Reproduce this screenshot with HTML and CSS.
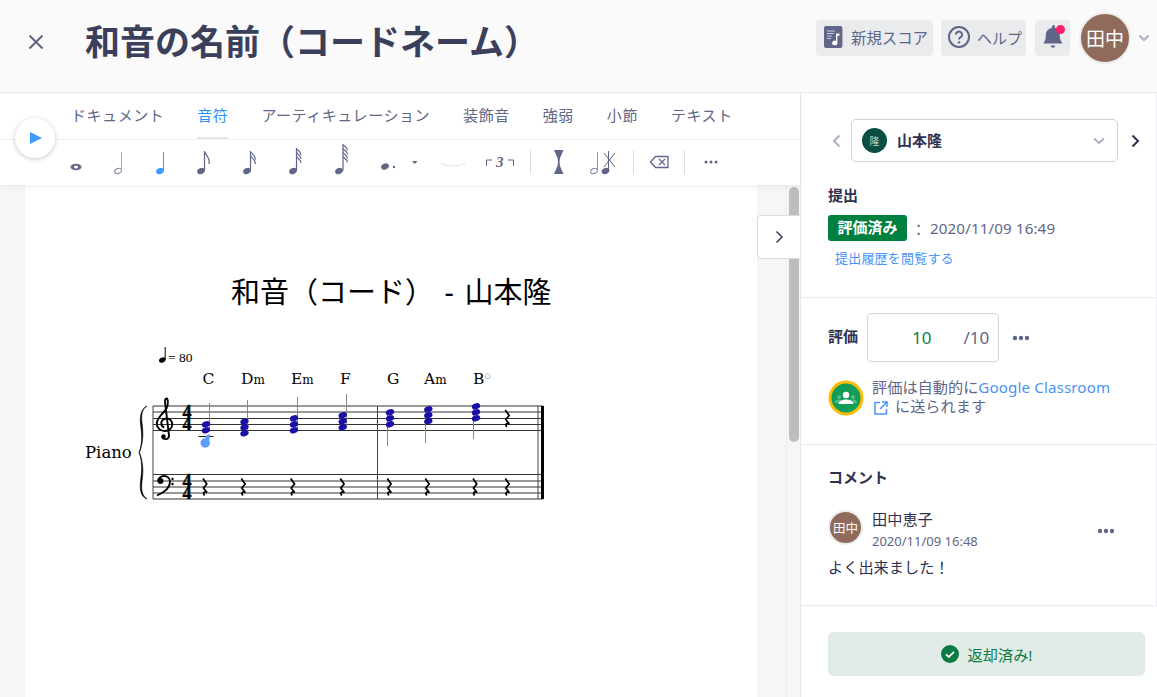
FILE: index.html
```html
<!DOCTYPE html>
<html lang="ja">
<head>
    <meta charset="UTF-8">
    <title>和音の名前（コードネーム）</title>
    <link rel="stylesheet" href="styles.css">
</head>
<body>
    <header class="topbar">
        <button class="close-btn" aria-label="閉じる">
            <svg width="16" height="16" viewBox="0 0 16 16"><path d="M1.500 1.500l13 13M14.500 1.500l-13 13" class="ico-line"/></svg>
        </button>
        <h1 class="page-title">和音の名前（コードネーム）</h1>
        <div class="actions">
            <a class="action-btn new-score">
                <svg width="19" height="22" viewBox="0 0 19 22">
                    <rect width="18.400" height="22" rx="2" fill="#5f6688"/>
                    <path d="M3 5h8M3 7.500h7M3 10h5M3 12.500h4" stroke="#c9cce0" stroke-width="1"/>
                    <path d="M12 7.500h3.500v2.200H13.400v7.300a2.600 2.300 0 1 1-1.400-2z" fill="#fff"/>
                </svg>
                <span>新規スコア</span>
            </a>
            <a class="action-btn help">
                <svg width="22" height="22" viewBox="0 0 22 22">
                    <circle cx="11" cy="11" r="10" fill="none" stroke="#5f6688" stroke-width="2"/>
                    <path d="M7.800 8.600a3.200 3 0 1 1 4.800 2.600c-1 .6-1.600 1.100-1.600 2.400" fill="none" stroke="#5f6688" stroke-width="2"/>
                    <circle cx="11" cy="16.400" r="1.200" fill="#5f6688"/>
                </svg>
                <span>ヘルプ</span>
            </a>
            <a class="action-btn bell">
                <svg width="20" height="24" viewBox="0 0 20 24">
                    <path d="M9 1.500a1.500 1.500 0 0 1 3 0v1.200c3.400.8 4.700 3.600 4.700 7 0 4 .9 6.200 2.300 7.800v1H.8v-1c1.400-1.600 2-3.800 2-7.800 0-3.400 2.600-6.200 6.200-7z" fill="#5f6688"/>
                    <path d="M7.800 20.500h4.400a2.200 2.200 0 0 1-4.400 0z" fill="#5f6688"/>
                </svg>
                <i class="bell-dot"></i>
            </a>
            <div class="avatar avatar-lg">田中</div>
            <svg class="user-caret" width="12" height="8" viewBox="0 0 12 8"><path d="M1.500 1.500L6 6l4.500-4.500" fill="none" stroke="#a9afc4" stroke-width="2"/></svg>
        </div>
    </header>

    <main class="workspace">
        <section class="editor">
            <div class="toolbar">
                <button class="play-btn" aria-label="再生">
                    <svg width="12" height="12" viewBox="0 0 12 12"><path d="M0 0l12 6-12 6z" fill="#3d9bff"/></svg>
                </button>
                <nav class="tabs">
                    <a class="tab">ドキュメント</a>
                    <a class="tab active">音符</a>
                    <a class="tab">アーティキュレーション</a>
                    <a class="tab">装飾音</a>
                    <a class="tab">強弱</a>
                    <a class="tab">小節</a>
                    <a class="tab">テキスト</a>
                </nav>
                <div class="tools">
                    <svg width="32" height="30" class="tool">
                        <ellipse cx="16" cy="21" rx="5.500" ry="3.200" fill="#5f6688"/><ellipse cx="16" cy="21" rx="2" ry="1.500" fill="#fff"/>
                    </svg>
                    <svg width="52" height="30" class="tool">
                        <ellipse cx="26" cy="25" rx="3.500" ry="2.500" transform="rotate(-25 26 25)" fill="none" stroke="#7a80a0"/>
                        <path d="M29.500 24.500V6" stroke="#a6abc2"/>
                    </svg>
                    <svg width="34" height="30" class="tool">
                        <ellipse cx="16" cy="25" rx="4" ry="3" transform="rotate(-25 16 25)" fill="#3d9bff"/>
                        <path d="M19.500 24.500V6" stroke="#3d9bff"/>
                    </svg>
                    <svg width="52" height="30" class="tool">
                        <ellipse cx="23" cy="25" rx="4" ry="3" transform="rotate(-25 23 25)" fill="#5f6688"/>
                        <path d="M26.500 24.500V5c.5 4 6 6 4.500 13" stroke="#5f6688" stroke-width="1.200" fill="none"/>
                    </svg>
                    <svg width="40" height="30" class="tool">
                        <ellipse cx="17" cy="25" rx="4" ry="3" transform="rotate(-25 17 25)" fill="#5f6688"/>
                        <path d="M20.500 24.500V5c.5 3 5 4 5 8.500M20.500 9c.5 3 5 4 5 9" stroke="#5f6688" stroke-width="1.200" fill="none"/>
                    </svg>
                    <svg width="52" height="30" class="tool">
                        <ellipse cx="23" cy="25" rx="4" ry="3" transform="rotate(-25 23 25)" fill="#5f6688"/>
                        <path d="M26.500 24.500V2c.5 2.500 4.500 3 4.500 7M26.500 6c.5 2.500 4.500 3 4.500 7M26.500 10c.5 2.500 4.500 3 4.500 7" stroke="#5f6688" stroke-width="1.200" fill="none"/>
                    </svg>
                    <svg width="38" height="30" class="tool">
                        <ellipse cx="17" cy="25" rx="4" ry="3" transform="rotate(-25 17 25)" fill="#5f6688"/>
                        <path d="M21 24.500V-2c.5 2.500 4.500 3 4.500 6.500M21 2c.5 2.500 4.500 3 4.500 6.500M21 6c.5 2.500 4.500 3 4.500 6.500M21 10c.5 2.500 4.500 3 4.500 6.500" stroke="#5f6688" stroke-width="1.200" fill="none"/>
                    </svg>
                    <svg width="60" height="30" class="tool">
                        <ellipse cx="25" cy="20.500" rx="4" ry="3" transform="rotate(-25 25 20.500)" fill="#5f6688"/>
                        <circle cx="34" cy="21" r="1.200" fill="#5f6688"/>
                        <path d="M52 15h5.500l-2.750 3z" fill="#5f6688"/>
                    </svg>
                    <svg width="66" height="30" class="tool">
                        <path d="M21 17c5 4 19 4 24 0" stroke="#e4e5ea" stroke-width="1.200" fill="none"/>
                    </svg>
                    <svg width="44" height="30" class="tool">
                        <path d="M.5 20v-6h5.500M22 14h5.500v6" stroke="#5f6688" fill="none"/>
                        <text x="10" y="20.500" class="tuplet-num">3</text>
                    </svg>
                    <i class="tool-sep"></i>
                    <svg width="56" height="30" class="tool">
                        <path d="M23 4h9.500l-3.500 8-.5 4 .5 4 3.500 8H23l3.500-8 .5-4-.5-4z" fill="#5f6688"/>
                    </svg>
                    <svg width="46" height="30" class="tool">
                        <ellipse cx="7" cy="25" rx="3.500" ry="2.500" transform="rotate(-25 7 25)" fill="none" stroke="#7a80a0"/>
                        <path d="M10.500 24.500V6" stroke="#8c92ac"/>
                        <ellipse cx="18.500" cy="25" rx="4" ry="3" transform="rotate(-25 18.500 25)" fill="#5f6688"/>
                        <path d="M21.500 24V5M17 7l11 14M28 7L17 21" stroke="#5f6688" fill="none"/>
                    </svg>
                    <i class="tool-sep"></i>
                    <svg width="50" height="30" class="tool">
                        <path d="M21.500 10.500H34v11H21.500l-5-5.500z" fill="none" stroke="#5f6688" stroke-width="1.300"/>
                        <path d="M25 13l6 6M31 13l-6 6" stroke="#5f6688" stroke-width="1.300"/>
                    </svg>
                    <i class="tool-sep"></i>
                    <svg width="44" height="30" class="tool">
                        <circle cx="21" cy="16" r="1.500" fill="#5f6688"/><circle cx="26" cy="16" r="1.500" fill="#5f6688"/><circle cx="31" cy="16" r="1.500" fill="#5f6688"/>
                    </svg>
                </div>
            </div>

            <div class="score-area">
                <div class="paper">
                    <svg class="score" width="732" height="512" viewBox="25 185 732 512">
                        <defs>
                            <path id="rest" class="rest-mark" d="M-2-8.500L1.800-3-1.500 1 2 5.500C-.5 4-2.500 5.500-.5 8.500"/>
                        </defs>

                        <text x="231" y="303" class="score-title">和音（コード） - 山本隆</text>

                        <ellipse cx="162.300" cy="360" rx="3.400" ry="2.500" transform="rotate(-25 162.300 360)"/>
                        <path d="M165.200 359.500V347" stroke="#000"/>
                        <text x="168" y="362" class="tempo">= 80</text>

                        <text x="202.500" y="384" class="chord">C</text>
                        <text x="241" y="384" class="chord">D<tspan class="chord-sub">m</tspan></text>
                        <text x="291" y="384" class="chord">E<tspan class="chord-sub">m</tspan></text>
                        <text x="340" y="384" class="chord">F</text>
                        <text x="387" y="384" class="chord">G</text>
                        <text x="424" y="384" class="chord">A<tspan class="chord-sub">m</tspan></text>
                        <text x="473" y="384" class="chord">B<tspan class="chord-sup" dy="-6">○</tspan></text>

                        <text x="85" y="458" class="instrument">Piano</text>

                        <!-- staves -->
                        <path class="staff" d="M153 406H543M153 412H543M153 418.500H543M153 424.500H543M153 430.500H543"/>
                        <path class="staff" d="M153 474.500H543M153 481H543M153 487H543M153 493H543M153 499H543"/>
                        <path class="bar" d="M153 406V499M377.500 406V499M538 406V499"/>
                        <rect x="541" y="406" width="3" height="93"/>

                        <!-- brace -->
                        <path class="brace" d="M147 406c-5 3-6 9-5 17s2 17-2.500 29.500c4.500 12.500 3.500 21 2.500 29s0 14 5 17.500c-6-2-7.500-9-6.500-17.500s2.500-19-1.500-29c4-10 2.500-20.500 1.500-29s1.500-15.500 6.500-17.500z"/>

                        <!-- treble clef -->
                        <path class="clef" d="M162 437c2 3.500 7 2.500 7-1.500L165 402c-.5-3 1.500-4.500 2.300-3 1.500 3 .5 9-3 12.500-4 4-7.500 7.500-7.500 12 0 5 4 7.500 8 7.500 4.500 0 7.500-3 7.500-6.500s-2.500-6-5.500-6-5.500 2-5.500 4.500 1.500 4 3 4.500"/>
                        <circle cx="163.500" cy="436.500" r="2.200"/>

                        <!-- bass clef -->
                        <circle cx="160.500" cy="481" r="2.900"/>
                        <path class="clef" d="M158 481c0-3 3-5 6-5 3.500 0 6 2.500 6 6 0 5-5 10-13 13.500"/>
                        <circle cx="172.500" cy="479" r="1.200"/><circle cx="172.500" cy="484" r="1.200"/>

                        <text class="time-sig"><tspan x="182.500" y="418">4</tspan><tspan x="182.500" y="430">4</tspan></text>
                        <text class="time-sig"><tspan x="182.500" y="487">4</tspan><tspan x="182.500" y="499">4</tspan></text>

                        <!-- chords -->
                        <path class="ledger" d="M198.500 436.500h15"/>
                        <path class="stem" d="M209.500 430V403M247.500 433V400M297.500 430V397M346.500 427V394M387.500 412V446M425.500 409V443M473.500 406V439"/>
                        <g class="notes">
                            <ellipse cx="206" cy="424.300" rx="4.300" ry="3"/><ellipse cx="206" cy="430.300" rx="4.300" ry="3"/>
                            <ellipse cx="244.500" cy="421.500" rx="4.300" ry="3"/><ellipse cx="244.500" cy="427.300" rx="4.300" ry="3"/><ellipse cx="244.500" cy="433.300" rx="4.300" ry="3"/>
                            <ellipse cx="294" cy="418.300" rx="4.300" ry="3"/><ellipse cx="294" cy="424.300" rx="4.300" ry="3"/><ellipse cx="294" cy="430.300" rx="4.300" ry="3"/>
                            <ellipse cx="342.700" cy="415.300" rx="4.300" ry="3"/><ellipse cx="342.700" cy="421.300" rx="4.300" ry="3"/><ellipse cx="342.700" cy="427.300" rx="4.300" ry="3"/>
                            <ellipse cx="390" cy="412.300" rx="4.300" ry="3"/><ellipse cx="390" cy="418.300" rx="4.300" ry="3"/><ellipse cx="390" cy="424.300" rx="4.300" ry="3"/>
                            <ellipse cx="428.300" cy="409.300" rx="4.300" ry="3"/><ellipse cx="428.300" cy="415.300" rx="4.300" ry="3"/><ellipse cx="428.300" cy="421.300" rx="4.300" ry="3"/>
                            <ellipse cx="476" cy="406.300" rx="4.300" ry="3"/><ellipse cx="476" cy="412.300" rx="4.300" ry="3"/><ellipse cx="476" cy="418.300" rx="4.300" ry="3"/>
                        </g>
                        <path d="M204 443l2-7.500 4-1.500-1 9z" fill="#5a9cff"/>
                        <circle cx="205.200" cy="443" r="4.700" fill="#5a9cff"/>

                        <!-- rests -->
                        <use href="#rest" x="507.300" y="418.500"/>
                        <use href="#rest" x="205" y="487"/><use href="#rest" x="243.300" y="487"/>
                        <use href="#rest" x="292.700" y="487"/><use href="#rest" x="342.300" y="487"/>
                        <use href="#rest" x="389.300" y="487"/><use href="#rest" x="427.300" y="487"/>
                        <use href="#rest" x="475" y="487"/><use href="#rest" x="507.300" y="487"/>
                    </svg>
                </div>
                <div class="scroll-track"><div class="scroll-thumb"></div></div>
                <button class="collapse-tab" aria-label="パネルを閉じる">
                    <svg width="9" height="14" viewBox="0 0 9 14"><path d="M1.500 1.500L7 7l-5.500 5.500" fill="none" stroke="#3d4264" stroke-width="1.500"/></svg>
                </button>
            </div>
        </section>

        <aside class="side-panel">
            <section class="panel-section submit-section">
                <div class="student-row">
                    <svg width="9" height="14" viewBox="0 0 9 14"><path d="M7.500 1.500L2 7l5.500 5.500" fill="none" stroke="#aeb2c0" stroke-width="2"/></svg>
                    <div class="student-select">
                        <span class="avatar avatar-student">隆</span>
                        <strong>山本隆</strong>
                        <svg class="select-caret" width="12" height="8" viewBox="0 0 12 8"><path d="M1 1.500L6 6l5-4.500" fill="none" stroke="#a9afc4" stroke-width="2"/></svg>
                    </div>
                    <svg class="next-student" width="9" height="14" viewBox="0 0 9 14"><path d="M1.500 1.500L7 7l-5.500 5.500" fill="none" stroke="#2e3150" stroke-width="2"/></svg>
                </div>
                <h3 class="panel-heading">提出</h3>
                <div class="status-row">
                    <span class="badge">評価済み</span>
                    <span class="status-colon">：</span>
                    <span class="status-date">2020/11/09 16:49</span>
                </div>
                <a class="history-link">提出履歴を閲覧する</a>
            </section>

            <section class="panel-section grade-section">
                <div class="grade-row">
                    <h3 class="panel-heading">評価</h3>
                    <div class="grade-box"><span class="grade-value">10</span><span class="grade-max">/10</span></div>
                    <svg class="dots" width="18" height="6" viewBox="0 0 18 6"><circle cx="3" cy="3" r="2.200"/><circle cx="9" cy="3" r="2.200"/><circle cx="15" cy="3" r="2.200"/></svg>
                </div>
                <div class="classroom-note">
                    <svg class="classroom-icon" width="36" height="36" viewBox="0 0 36 36">
                        <circle cx="18" cy="18" r="17.500" fill="#fbbc04"/>
                        <circle cx="18" cy="18" r="14.500" fill="#0f9d58"/>
                        <circle cx="18" cy="15" r="3.200" fill="#fff"/>
                        <circle cx="11" cy="17" r="2" fill="#57bb8a"/><circle cx="25" cy="17" r="2" fill="#57bb8a"/>
                        <path d="M6.500 23c.5-2.500 3-3.500 4.500-3.500s3 .5 4 1.500l-2 2zM29.500 23c-.5-2.500-3-3.500-4.500-3.500s-3 .5-4 1.500l2 2z" fill="#57bb8a"/>
                        <path d="M10.500 24c.5-3 4-4.500 7.500-4.500s7 1.500 7.500 4.500z" fill="#fff"/>
                    </svg>
                    <p>評価は自動的に<a>Google Classroom</a><br><svg class="external-icon" width="14" height="14" viewBox="0 0 14 14"><path d="M6 1.500H1v11.500h11.500V8M8 1h5v5M13 1L6 8" fill="none" stroke="#4a94f8" stroke-width="1.500"/></svg> に送られます</p>
                </div>
            </section>

            <section class="panel-section comment-section">
                <h3 class="panel-heading">コメント</h3>
                <div class="comment-head">
                    <div class="avatar avatar-sm">田中</div>
                    <div class="comment-meta">
                        <div class="comment-name">田中恵子</div>
                        <div class="comment-time">2020/11/09 16:48</div>
                    </div>
                    <svg class="dots" width="18" height="6" viewBox="0 0 18 6"><circle cx="3" cy="3" r="2.200"/><circle cx="9" cy="3" r="2.200"/><circle cx="15" cy="3" r="2.200"/></svg>
                </div>
                <p class="comment-body">よく出来ました！</p>
            </section>

            <div class="return-wrap">
                <button class="return-btn">
                    <svg width="18" height="18" viewBox="0 0 18 18"><circle cx="9" cy="9" r="9" fill="#0a7c42"/><path d="M5 9.300l2.800 2.700L13 6.800" fill="none" stroke="#fff" stroke-width="1.800"/></svg>
                    返却済み!
                </button>
            </div>
        </aside>
    </main>
</body>
</html>
```

FILE: styles.css
```css
* {
    box-sizing: border-box;
}

html, body {
    height: 100%;
    margin: 0;
    overflow: hidden;
}

body {
    font-family: "Noto Sans", "Noto Sans CJK JP", sans-serif;
    font-size: 15.2px;
    color: #5f6688;
    background-color: #fafafa;
    display: flex;
    flex-direction: column;
}

button {
    font-family: inherit;
    border: none;
    padding: 0;
    background: none;
}

h1, h3, p {
    margin: 0;
}

/* Top bar */
.topbar {
    height: 93px;
    flex: none;
    display: flex;
    align-items: center;
    padding: 0 7px 8px 28px;
    background-color: #fafafa;
    border-bottom: 1px solid #e9e9ee;
}

.close-btn {
    width: 16px;
    height: 16px;
    display: flex;
}

.ico-line {
    stroke: #5f6688;
    stroke-width: 2;
}

.page-title {
    margin-left: 41px;
    font-size: 35px;
    font-weight: 700;
    line-height: 1.2;
    color: #3a3f5c;
}

.actions {
    margin-left: auto;
    align-self: flex-start;
    padding-top: 12px;
    display: flex;
    align-items: center;
}

.action-btn {
    height: 36px;
    display: flex;
    align-items: center;
    background-color: #eaebed;
    border-radius: 4px;
    position: relative;
    margin-right: 8px;
    font-size: 15.4px;
    padding-bottom: 2px;
}

.new-score {
    width: 117px;
    padding-left: 8px;
    gap: 8px;
}

.help {
    width: 85px;
    padding-left: 7px;
    gap: 7px;
    font-size: 15px;
}

.bell {
    width: 35px;
    margin: 0 9px 0 1px;
    justify-content: center;
}

.bell-dot {
    position: absolute;
    top: 5px;
    right: 5px;
    width: 9px;
    height: 9px;
    border-radius: 50%;
    background-color: #ff1f6b;
}

.avatar {
    border-radius: 50%;
    background-color: #906b5c;
    color: #fff;
    display: flex;
    align-items: center;
    justify-content: center;
    flex: none;
}

.avatar-lg {
    width: 52px;
    height: 52px;
    border: 2px solid #ececec;
    font-size: 19px;
}

.user-caret {
    margin-left: 7px;
}

/* Editor side */
.workspace {
    flex: 1;
    display: flex;
    min-height: 0;
}

.editor {
    width: 800px;
    flex: none;
    display: flex;
    flex-direction: column;
    position: relative;
}

.toolbar {
    height: 92px;
    flex: none;
    background-color: #fff;
    box-shadow: 0 2px 6px rgba(0, 0, 0, 0.06);
    position: relative;
    z-index: 2;
}

.play-btn {
    position: absolute;
    left: 15px;
    top: 25px;
    width: 40px;
    height: 40px;
    border-radius: 50%;
    background-color: #fff;
    box-shadow: 0 1px 5px rgba(0, 0, 0, 0.22);
    display: flex;
    align-items: center;
    justify-content: center;
    padding-left: 1px;
}

.tabs {
    height: 47px;
    display: flex;
    gap: 33px;
    padding-left: 71px;
    border-bottom: 1px solid #f0f0f2;
}

.tab {
    height: 46px;
    line-height: 44px;
    font-size: 15px;
    letter-spacing: 0.55px;
    white-space: nowrap;
    border-bottom: 2px solid transparent;
    color: #5f6688;
}

.tab.active {
    color: #1e90ff;
    border-bottom-color: #e5e5ea;
}

.tools {
    display: flex;
    align-items: flex-start;
    padding: 6px 0 0 60px;
}

.tool {
    flex: none;
    overflow: visible;
}

.tool-sep {
    width: 1px;
    height: 24px;
    margin-top: 4px;
    flex: none;
    background-color: #dcdde3;
}

.tuplet-num {
    font-family: "Liberation Serif", serif;
    font-style: italic;
    font-weight: 700;
    font-size: 15px;
    fill: #5f6688;
}

/* Score */
.score-area {
    flex: 1;
    min-height: 0;
    display: flex;
    background-color: #f6f6f6;
    position: relative;
}

.paper {
    width: 732px;
    margin-left: 25px;
    background-color: #fff;
}

.score {
    display: block;
    font-family: "DejaVu Serif", serif;
}

.score-title {
    font-family: "Noto Sans", "Noto Sans CJK JP", sans-serif;
    font-size: 29px;
    word-spacing: 3px;
    fill: #000;
}

.tempo {
    font-family: "Liberation Serif", serif;
    font-size: 13.5px;
}

.chord {
    font-size: 15.5px;
}

.chord-sub {
    font-size: 12px;
}

.chord-sup {
    font-family: "DejaVu Sans", sans-serif;
    font-size: 7px;
    fill: #555;
}

.instrument {
    font-size: 16.5px;
}

.staff {
    stroke: #333;
    stroke-width: 1;
    fill: none;
}

.bar {
    stroke: #444;
    stroke-width: 1;
}

.clef {
    fill: none;
    stroke: #000;
    stroke-width: 1.9;
}

.brace {
    stroke: #000;
    stroke-width: 0.6;
}

.rest-mark {
    fill: none;
    stroke: #000;
    stroke-width: 1.7;
}

.time-sig {
    font-family: "Liberation Serif", serif;
    font-weight: 700;
    font-size: 18px;
    stroke: #000;
    stroke-width: 0.4;
}

.ledger {
    stroke: #222;
    stroke-width: 1;
}

.stem {
    stroke: #888;
    stroke-width: 1;
}

.notes ellipse {
    fill: #1c0fa8;
    transform-box: fill-box;
    transform-origin: center;
    transform: rotate(-20deg);
}

.scroll-track {
    margin-left: 29px;
    width: 14px;
    padding: 2px 2px 0;
    background-color: #f6f6f6;
    border-left: 1px solid #eee;
}

.scroll-thumb {
    width: 10px;
    height: 255px;
    background-color: #bdbdbd;
    border-radius: 5px;
}

.collapse-tab {
    position: absolute;
    top: 30px;
    left: 757px;
    width: 43px;
    height: 44px;
    background-color: #fff;
    border: 1px solid #d5dddd;
    border-right: none;
    border-radius: 4px 0 0 4px;
    display: flex;
    align-items: center;
    justify-content: center;
}

/* Right panel */
.side-panel {
    flex: 1;
    background-color: #fff;
    border-left: 1px solid #e6e6ee;
    display: flex;
    flex-direction: column;
}

.panel-section {
    border-bottom: 1px solid #ebebef;
    border-right: 1px solid #f0f0f4;
    padding-left: 27px;
}

.submit-section {
    height: 205px;
    padding-top: 26px;
}

.student-row {
    display: flex;
    align-items: center;
    gap: 10px;
    margin-left: 4px;
}

.next-student {
    margin-left: 3px;
}

.student-select {
    width: 267px;
    height: 43px;
    border: 1px solid #ccd3dc;
    border-radius: 5px;
    display: flex;
    align-items: center;
    padding: 0 0 2px 10px;
    gap: 10px;
    color: #2e3150;
}

.student-select strong {
    font-size: 15px;
}

.avatar-student {
    width: 25px;
    height: 25px;
    margin-top: 2px;
    background-color: #0a4f41;
    color: #b9d3cc;
    font-size: 10px;
}

.select-caret {
    margin-left: auto;
    margin-right: 12px;
    margin-top: 2px;
}

.panel-heading {
    font-size: 15px;
    font-weight: 700;
    line-height: 20px;
    color: #2e3150;
}

.submit-section .panel-heading {
    margin-top: 23px;
}

.status-row {
    display: flex;
    align-items: center;
    margin-top: 10px;
    height: 26px;
}

.status-date {
    letter-spacing: 0.1px;
    margin-top: -1px;
}

.badge {
    width: 79px;
    height: 26px;
    line-height: 25px;
    text-align: center;
    background-color: #00803f;
    color: #fff;
    font-weight: 700;
    font-size: 15px;
    border-radius: 3px;
    white-space: nowrap;
}

.status-colon {
    width: 23px;
    text-align: center;
}

.history-link {
    display: block;
    margin: 7px 0 0 7px;
    font-size: 13px;
    letter-spacing: 0.2px;
    color: #4a94f8;
}

.grade-section {
    height: 147px;
    padding-top: 15px;
}

.grade-row {
    display: flex;
    align-items: center;
}

.grade-row .panel-heading {
    margin-bottom: 4px;
}

.grade-box {
    width: 132px;
    height: 49px;
    margin-left: 9px;
    border: 1px solid #ccd9d9;
    border-radius: 4px;
    display: flex;
    align-items: center;
    font-size: 17px;
}

.grade-value {
    margin-left: 44px;
    color: #0a8043;
}

.grade-max {
    margin-left: 32px;
}

.dots {
    fill: #5f6688;
    flex: none;
}

.grade-row .dots {
    margin-left: 13px;
}

.classroom-note {
    display: flex;
    align-items: flex-start;
    margin-top: 17px;
    gap: 8px;
}

.classroom-icon {
    flex: none;
    margin-top: 1px;
}

.classroom-note p {
    margin-top: -1px;
    line-height: 19px;
    white-space: nowrap;
}

.classroom-note a {
    color: #4a94f8;
    letter-spacing: 0.1px;
}

.external-icon {
    margin: 0 3px 0 2px;
    vertical-align: -3px;
}

.comment-section {
    height: 161px;
    padding-top: 22px;
}

.comment-head {
    display: flex;
    align-items: flex-start;
    margin-top: 21px;
}

.avatar-sm {
    width: 35px;
    height: 35px;
    margin-top: 2px;
    border: 2px solid #ececec;
    font-size: 12.5px;
}

.comment-meta {
    margin-left: 9px;
}

.comment-name {
    line-height: 22px;
    color: #2e3150;
}

.comment-time {
    font-size: 13px;
    line-height: 20px;
    margin-top: 1px;
}

.comment-head .dots {
    margin: 20px 0 0 119px;
}

.comment-body {
    margin-top: 5px;
    line-height: 22px;
    color: #2e3150;
}

.return-wrap {
    padding: 26px 11px 0 27px;
}

.return-btn {
    width: 317px;
    height: 44px;
    background-color: #e1ece8;
    border-radius: 5px;
    color: #0a7c42;
    font-size: 15.2px;
    display: flex;
    align-items: center;
    justify-content: center;
    gap: 9px;
}
```
